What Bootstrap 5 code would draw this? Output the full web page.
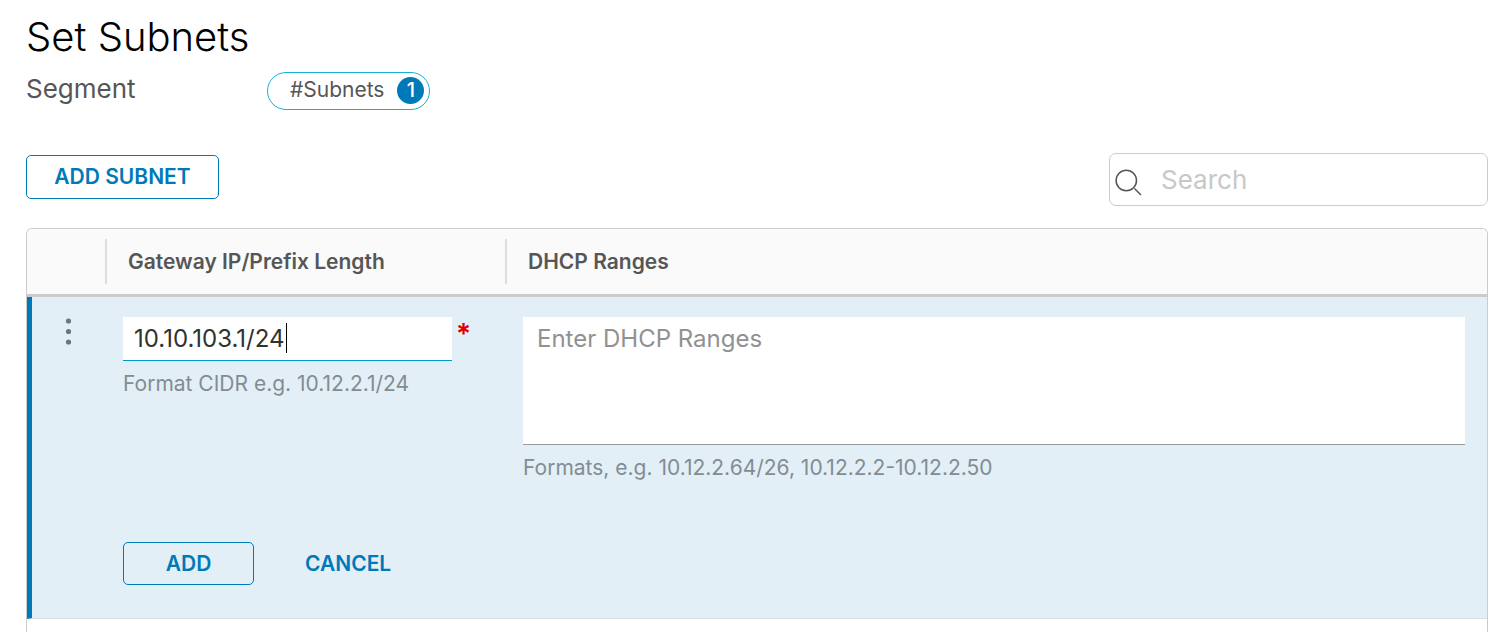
<!DOCTYPE html>
<html lang="en">
<head>
<meta charset="utf-8">
<meta name="viewport" content="width=device-width, initial-scale=1">
<title>Set Subnets</title>
<link href="https://cdn.jsdelivr.net/npm/bootstrap@5.3.0/dist/css/bootstrap.min.css" rel="stylesheet">
<style>
  body { font-family: Inter, "Open Sans", sans-serif; color: #565656; font-size: 21px; line-height: 24px; background: #fff; }
  .page { padding: 16px 8px 0 26px; }
  .page-title { font-size: 40px; line-height: 42px; font-weight: 300; color: #000; margin: 0; }
  .segment-row { margin-top: 14px; }
  .segment-label { width: 241px; font-size: 26px; line-height: 34px; }
  .count-pill { height: 38px; border: 1px solid #19b0d8; border-radius: 19px; padding: 0 5px 2px 22px; gap: 13px; }
  .count-dot { width: 27px; height: 27px; border-radius: 50%; background: #0079b8; color: #fff; font-size: 20px; font-weight: 500; }
  .btn { --bs-btn-font-size: 21px; --bs-btn-line-height: 24px; --bs-btn-font-weight: 600; --bs-btn-border-radius: 5px; }
  .btn-line { --bs-btn-color: #0079b8; --bs-btn-border-color: #0079b8; --bs-btn-hover-color: #004a70; --bs-btn-hover-bg: #e1f1f6; --bs-btn-hover-border-color: #0079b8; }
  .btn-flat { --bs-btn-color: #0079b8; --bs-btn-hover-color: #004a70; --bs-btn-padding-x: 0; }
  .add-subnet { --bs-btn-padding-y: 9px; min-width: 193px; }
  .row-action { --bs-btn-padding-y: 9px; height: 43px; }
  .row-actions { gap: 50px; }
  .add-row { min-width: 131px; }
  .toolbar { margin-top: 43px; }
  .toolbar-actions { padding-bottom: 5px; }
  .search-box { width: 379px; height: 53px; border: 1px solid #ccc; border-radius: 7px; padding: 0 6px 0 5px; gap: 18px; }
  .search-box .form-control { font-size: 26px; line-height: 32px; padding: 0; border: 0; background: none; }
  .search-box .form-control::placeholder { color: #c8c8c8; opacity: 1; }
  .grid-frame { margin-top: 22px; border: 1px solid #ccc; border-bottom: 0; border-radius: 6px 6px 0 0; overflow: hidden; }
  .subnets { width: 100%; table-layout: fixed; border-collapse: separate; border-spacing: 0; }
  .subnets th { background: #fafafa; height: 68px; border-bottom: 3px solid #ccc; font-weight: 600; padding: 0; }
  .col-menu { width: 78px; }
  .col-gateway { width: 400px; }
  .head-cell { border-left: 2px solid #ddd; height: 45px; padding-left: 21px; }
  .subnets td { background: #e2eff7; vertical-align: top; padding: 20px 22px 0 18px; }
  .subnets td.menu-cell { border-left: 5px solid #0079b8; padding: 20px 0 0 32px; }
  .subnets td.menu-cell, .subnets td.action-cell { border-bottom: 1px solid #ddd; }
  .subnets td.action-cell { padding: 62px 0 33px 18px; }
  .menu-btn { border: 0; background: none; padding: 0; color: #6a7680; }
  .cell-input { border: 0; border-radius: 0; color: #313131; font-size: 24px; line-height: 28px; transition: none; }
  .gateway-wrap { width: 329px; }
  .gateway-input { height: 44px; border-bottom: 1px solid #0095d3; padding: 0 11px; }
  .caret-bar { position: absolute; left: 163px; top: 6px; width: 1px; height: 30px; background: #000; }
  .ranges-input { height: 128px; border-bottom: 1px solid #999; padding: 8px 14px; resize: none; }
  .ranges-input::placeholder { color: #919191; opacity: 1; }
  .required-mark { color: #e00000; font-size: 28px; line-height: 34px; font-weight: 600; }
  .hint { color: #828c93; margin-top: 11px; }
</style>
</head>
<body>
<main class="page min-vh-100 d-flex flex-column">
  <h1 class="page-title">Set Subnets</h1>
  <div class="segment-row d-flex align-items-start">
    <div class="segment-label">Segment</div>
    <div class="count-pill d-flex align-items-center">
      <span>#Subnets</span>
      <span class="count-dot d-flex align-items-center justify-content-center">1</span>
    </div>
  </div>
  <div class="toolbar d-flex justify-content-between align-items-center">
    <div class="toolbar-actions d-flex">
      <button type="button" class="btn btn-line add-subnet">ADD SUBNET</button>
    </div>
    <label class="search-box d-flex align-items-center" for="search">
      <svg class="flex-shrink-0" width="28" height="32" viewBox="0 0 28 32" fill="none" stroke="#565656" stroke-width="1.500" aria-hidden="true"><circle cx="11.300" cy="16.500" r="10.200"/><path d="M19.500 24.500l6.500 6.500"/></svg>
      <input id="search" type="search" class="form-control shadow-none" placeholder="Search" aria-label="Search">
    </label>
  </div>
  <div class="grid-frame flex-grow-1">
    <table class="subnets">
      <colgroup><col class="col-menu"><col class="col-gateway"><col></colgroup>
      <thead>
        <tr>
          <th aria-label="Actions"></th>
          <th scope="col"><div class="head-cell d-flex align-items-center">Gateway IP/Prefix Length</div></th>
          <th scope="col"><div class="head-cell d-flex align-items-center">DHCP Ranges</div></th>
        </tr>
      </thead>
      <tbody>
        <tr>
          <td class="menu-cell" rowspan="2">
            <button type="button" class="menu-btn d-block" aria-label="Row actions">
              <svg class="d-block" width="8" height="30" viewBox="0 0 8 30" fill="currentColor"><circle cx="4.500" cy="4" r="2.600"/><circle cx="4.500" cy="14.500" r="2.600"/><circle cx="4.500" cy="25" r="2.600"/></svg>
            </button>
          </td>
          <td>
            <div class="d-flex align-items-start">
              <div class="gateway-wrap position-relative">
                <input type="text" class="form-control cell-input gateway-input shadow-none" value="10.10.103.1/24" aria-label="Gateway IP/Prefix Length" aria-describedby="gateway-hint" required>
                <span class="caret-bar"></span>
              </div>
              <span class="required-mark ps-1">*</span>
            </div>
            <div class="hint" id="gateway-hint">Format CIDR e.g. 10.12.2.1/24</div>
          </td>
          <td>
            <textarea class="form-control cell-input ranges-input shadow-none" placeholder="Enter DHCP Ranges" aria-label="DHCP Ranges" aria-describedby="ranges-hint"></textarea>
            <div class="hint" id="ranges-hint">Formats, e.g. 10.12.2.64/26, 10.12.2.2-10.12.2.50</div>
          </td>
        </tr>
        <tr>
          <td class="action-cell" colspan="2">
            <div class="row-actions d-flex">
              <button type="button" class="btn btn-line row-action add-row">ADD</button>
              <button type="button" class="btn btn-flat row-action">CANCEL</button>
            </div>
          </td>
        </tr>
      </tbody>
    </table>
  </div>
</main>
<script src="https://cdn.jsdelivr.net/npm/bootstrap@5.3.0/dist/js/bootstrap.bundle.min.js"></script>
</body>
</html>
